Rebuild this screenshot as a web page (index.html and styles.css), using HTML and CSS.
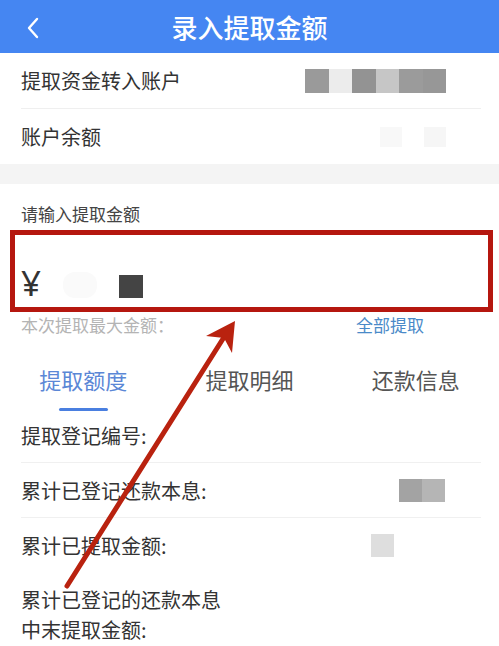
FILE: index.html
```html
<!DOCTYPE html>
<html lang="zh-CN">
<head>
  <meta charset="UTF-8">
  <title>录入提取金额</title>
  <link rel="stylesheet" href="styles.css">
</head>
<body>

  <header class="topbar">
    <span class="back">
      <svg width="14" height="22" viewBox="0 0 14 22"><path d="M11 2 L3 11 L11 20" fill="none" stroke="#fff" stroke-width="2.4" stroke-linecap="round" stroke-linejoin="round"/></svg>
    </span>
    <h1>录入提取金额</h1>
    <span></span>
  </header>

  <div class="info">
    <div class="info-row">
      <span>提取资金转入账户</span>
      <span class="mask">
        <i style="background:#9a9a9a"></i><i style="background:#ececec"></i><i style="background:#939393"></i><i style="background:#c6c6c6"></i><i style="background:#9b9b9b"></i><i style="background:#979797"></i>
      </span>
    </div>
    <div class="info-row">
      <span>账户余额</span>
      <span class="mask faint">
        <i style="background:#f8f8f8"></i><i style="background:#fff"></i><i style="background:#f6f6f6"></i>
      </span>
    </div>
  </div>

  <div class="gap"></div>

  <div class="amount">
    <div class="amount-label">请输入提取金额</div>
    <div class="amount-box">
      <span class="yen">¥</span>
      <span class="blur"></span>
      <span class="cursor"></span>
    </div>
    <div class="amount-hint">
      <span>本次提取最大金额：</span>
      <a href="#">全部提取</a>
    </div>
  </div>

  <nav class="tabs">
    <div class="tab active">提取额度</div>
    <div class="tab">提取明细</div>
    <div class="tab">还款信息</div>
  </nav>

  <div class="detail">
    <div class="detail-row">提取登记编号:</div>
    <div class="detail-row">
      <span>累计已登记还款本息:</span>
      <span class="mask small"><i style="background:#a3a3a3"></i><i style="background:#b5b5b5"></i></span>
    </div>
    <div class="detail-row">
      <span>累计已提取金额:</span>
      <span class="mask small light"><i style="background:#dedede"></i><i style="background:#fff"></i><i style="background:#fff"></i></span>
    </div>
    <div class="detail-row tall">累计已登记的还款本息<br>中末提取金额:</div>
  </div>

  <svg class="arrow" width="499" height="646" viewBox="0 0 499 646">
    <line x1="67" y1="586" x2="226" y2="334" stroke="#b9220f" stroke-width="5" stroke-linecap="round"/>
    <polygon points="235,321 232,353 224,338 206,336" fill="#b9220f"/>
  </svg>

</body>
</html>
```

FILE: styles.css
```css
body {
  margin: 0;
  font-family: "Noto Sans CJK SC", "Noto Sans", sans-serif;
  background: #fff;
  color: #333;
  position: relative;
  height: 646px;
  overflow: hidden;
}

.topbar {
  background: #4586f2;
  height: 53px;
  display: grid;
  grid-template-columns: 60px 1fr 60px;
  align-items: center;
}

.topbar h1 {
  margin: 0;
  text-align: center;
  color: #fff;
  font-size: 26px;
  font-weight: 500;
}

.back {
  display: flex;
  padding-left: 26px;
  padding-top: 2px;
}

.info {
  padding: 0 18px 0 21px;
}

.info-row {
  height: 55px;
  display: flex;
  justify-content: space-between;
  align-items: center;
  font-size: 20px;
}

.info-row + .info-row {
  border-top: 1px solid #efefef;
}

.mask {
  display: flex;
  margin-right: 35px;
}

.mask i {
  width: 23.5px;
  height: 24px;
}

.mask.faint i {
  height: 20px;
  width: 22px;
}

.gap {
  height: 20px;
  background: #f4f4f4;
}

.amount {
  padding: 20px 6px 0 10px;
}

.amount-label {
  font-size: 17px;
  line-height: 20px;
  padding-left: 11px;
  color: #444;
}

.amount-box {
  margin-top: 6px;
  border: 5px solid #b5170f;
  display: flex;
  align-items: flex-end;
  padding-left: 6px;
  padding-bottom: 9px;
  box-sizing: border-box;
  height: 82px;
}

.yen {
  font-family: "Noto Sans", sans-serif;
  font-size: 35px;
  line-height: 30px;
  color: #333;
}

.blur {
  width: 34px;
  height: 26px;
  margin: 0 22px 0 22px;
  background: #fafafa;
  border-radius: 12px;
}

.cursor {
  width: 24px;
  height: 23px;
  background: #444;
}

.amount-hint {
  display: flex;
  justify-content: space-between;
  align-items: center;
  font-size: 17px;
  line-height: 26px;
  padding: 0 69px 0 11px;
  color: #b4b4b4;
}

.amount-hint a {
  color: #4a8ac8;
  text-decoration: none;
}

.tabs {
  display: grid;
  grid-template-columns: repeat(3, 1fr);
  margin-top: 24px;
}

.tab {
  text-align: center;
  font-size: 22px;
  line-height: 34px;
  color: #555;
  padding-bottom: 12px;
  position: relative;
}

.tab.active {
  color: #5b87d6;
}

.tab.active::after {
  content: "";
  position: absolute;
  left: 50%;
  bottom: -3px;
  width: 49px;
  height: 3px;
  margin-left: -24px;
  border-radius: 2px;
  background: #4a7fe0;
}

.detail {
  padding: 0 18px 0 21px;
}

.detail-row {
  height: 54px;
  display: flex;
  justify-content: space-between;
  align-items: center;
  font-size: 20px;
}

.detail-row + .detail-row {
  border-top: 1px solid #f0f0f0;
}

.detail-row.tall {
  display: block;
  height: auto;
  padding-top: 13px;
  line-height: 30px;
  border-top: none;
}

.mask.small {
  margin-right: 36px;
}

.mask.small i {
  width: 23px;
  height: 23px;
}

.mask.light {
  margin-right: 41px;
}

.arrow {
  position: absolute;
  top: 0;
  left: 0;
  pointer-events: none;
}
```
